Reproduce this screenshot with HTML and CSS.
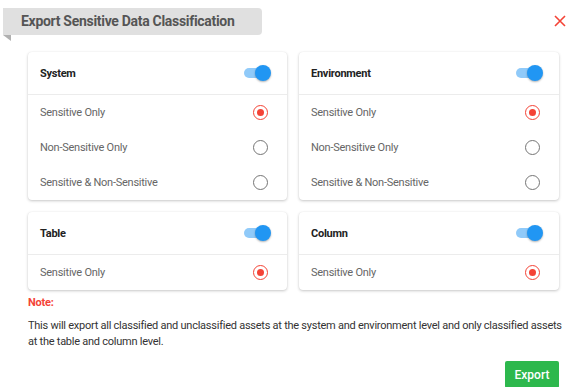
FILE: index.html
```html
<!DOCTYPE html>
<html>
<head>
<meta charset="utf-8">
<link rel="stylesheet" href="styles.css">
</head>
<body>
<div class="dialog">
  <div class="header">
    <div class="tab">Export Sensitive Data Classification</div>
    <div class="close">
      <svg width="12" height="12" viewBox="0 0 12 12"><path d="M1 1L11 11M11 1L1 11" stroke="#f44336" stroke-width="1.6" fill="none"/></svg>
    </div>
  </div>
  <div class="grid">
    <div class="card">
      <div class="card-head"><span>System</span><span class="toggle"><span class="thumb"></span></span></div>
      <div class="row"><span>Sensitive Only</span><span class="radio on"></span></div>
      <div class="row"><span>Non-Sensitive Only</span><span class="radio"></span></div>
      <div class="row"><span>Sensitive &amp; Non-Sensitive</span><span class="radio"></span></div>
    </div>
    <div class="card">
      <div class="card-head"><span>Environment</span><span class="toggle"><span class="thumb"></span></span></div>
      <div class="row"><span>Sensitive Only</span><span class="radio on"></span></div>
      <div class="row"><span>Non-Sensitive Only</span><span class="radio"></span></div>
      <div class="row"><span>Sensitive &amp; Non-Sensitive</span><span class="radio"></span></div>
    </div>
    <div class="card">
      <div class="card-head"><span>Table</span><span class="toggle"><span class="thumb"></span></span></div>
      <div class="row"><span>Sensitive Only</span><span class="radio on"></span></div>
    </div>
    <div class="card">
      <div class="card-head"><span>Column</span><span class="toggle"><span class="thumb"></span></span></div>
      <div class="row"><span>Sensitive Only</span><span class="radio on"></span></div>
    </div>
  </div>
  <div class="note-title">Note:</div>
  <p class="note">This will export all classified and unclassified assets at the system and environment level and only classified assets at the table and column level.</p>
  <div class="actions"><button class="export">Export</button></div>
</div>
</body>
</html>
```
FILE: styles.css
```css
* { box-sizing: border-box; }
html, body { margin: 0; padding: 0; background: #fff; }
body { font-family: Roboto, "Liberation Sans", sans-serif; width: 573px; height: 387px; overflow: hidden; }
.dialog { padding-top: 8px; }
.header { display: flex; justify-content: space-between; align-items: flex-start; padding-left: 3px; padding-right: 7px; }
.tab { position: relative; width: 259px; height: 27px; line-height: 27px; background: #e0e0e0; border-radius: 0 4px 4px 0; padding-left: 18px; font-size: 14px; font-weight: 700; color: #555; letter-spacing: -0.3px; }
.tab::after { content: ""; position: absolute; left: 0; top: 27px; width: 0; height: 0; border-top: 6px solid #b0b0b0; border-left: 8px solid transparent; }
.close { margin-top: 7px; width: 12px; height: 12px; display: flex; }
.grid { display: grid; grid-template-columns: 259px 260px; column-gap: 12px; row-gap: 12px; margin: 17px 0 0 28px; align-items: start; }
.card { background: #fff; border-radius: 4px; box-shadow: 0 1px 3px rgba(0,0,0,0.22), 0 0 1px rgba(0,0,0,0.08); }
.card-head { height: 43px; display: flex; align-items: center; justify-content: space-between; padding: 0 17px 0 12px; border-bottom: 1px solid #ececec; font-size: 11px; font-weight: 700; color: #222; letter-spacing: -0.25px; }
.row { height: 35px; display: flex; align-items: center; justify-content: space-between; padding: 0 19px 0 12px; font-size: 11px; color: #666; letter-spacing: -0.25px; }
.toggle { position: relative; width: 26px; height: 10px; border-radius: 5px; background: #90caf9; display: inline-block; }
.thumb { position: absolute; right: -1px; top: -3px; width: 16px; height: 16px; border-radius: 50%; background: #2196f3; box-shadow: 0 1px 2px rgba(0,0,0,0.3); }
.radio { width: 15px; height: 15px; border-radius: 50%; border: 1.5px solid #757575; display: inline-block; position: relative; }
.radio.on { border-color: #f44336; }
.radio.on::after { content: ""; position: absolute; left: 2.5px; top: 2.5px; width: 7px; height: 7px; border-radius: 50%; background: #f44336; }
.note-title { margin: 6px 0 0 28px; font-size: 11px; font-weight: 700; color: #f44336; line-height: 14px; letter-spacing: -0.2px; }
.note { margin: 8px 10px 0 28px; font-size: 11px; line-height: 16px; color: #333; letter-spacing: -0.25px; }
.actions { display: flex; justify-content: flex-end; padding-right: 14px; margin-top: 11px; }
.export { width: 54px; height: 27px; border: none; border-radius: 2px; background: #2db84d; color: #fff; font-family: Roboto, "Liberation Sans", sans-serif; font-size: 12px; font-weight: 500; padding: 0; }
```
